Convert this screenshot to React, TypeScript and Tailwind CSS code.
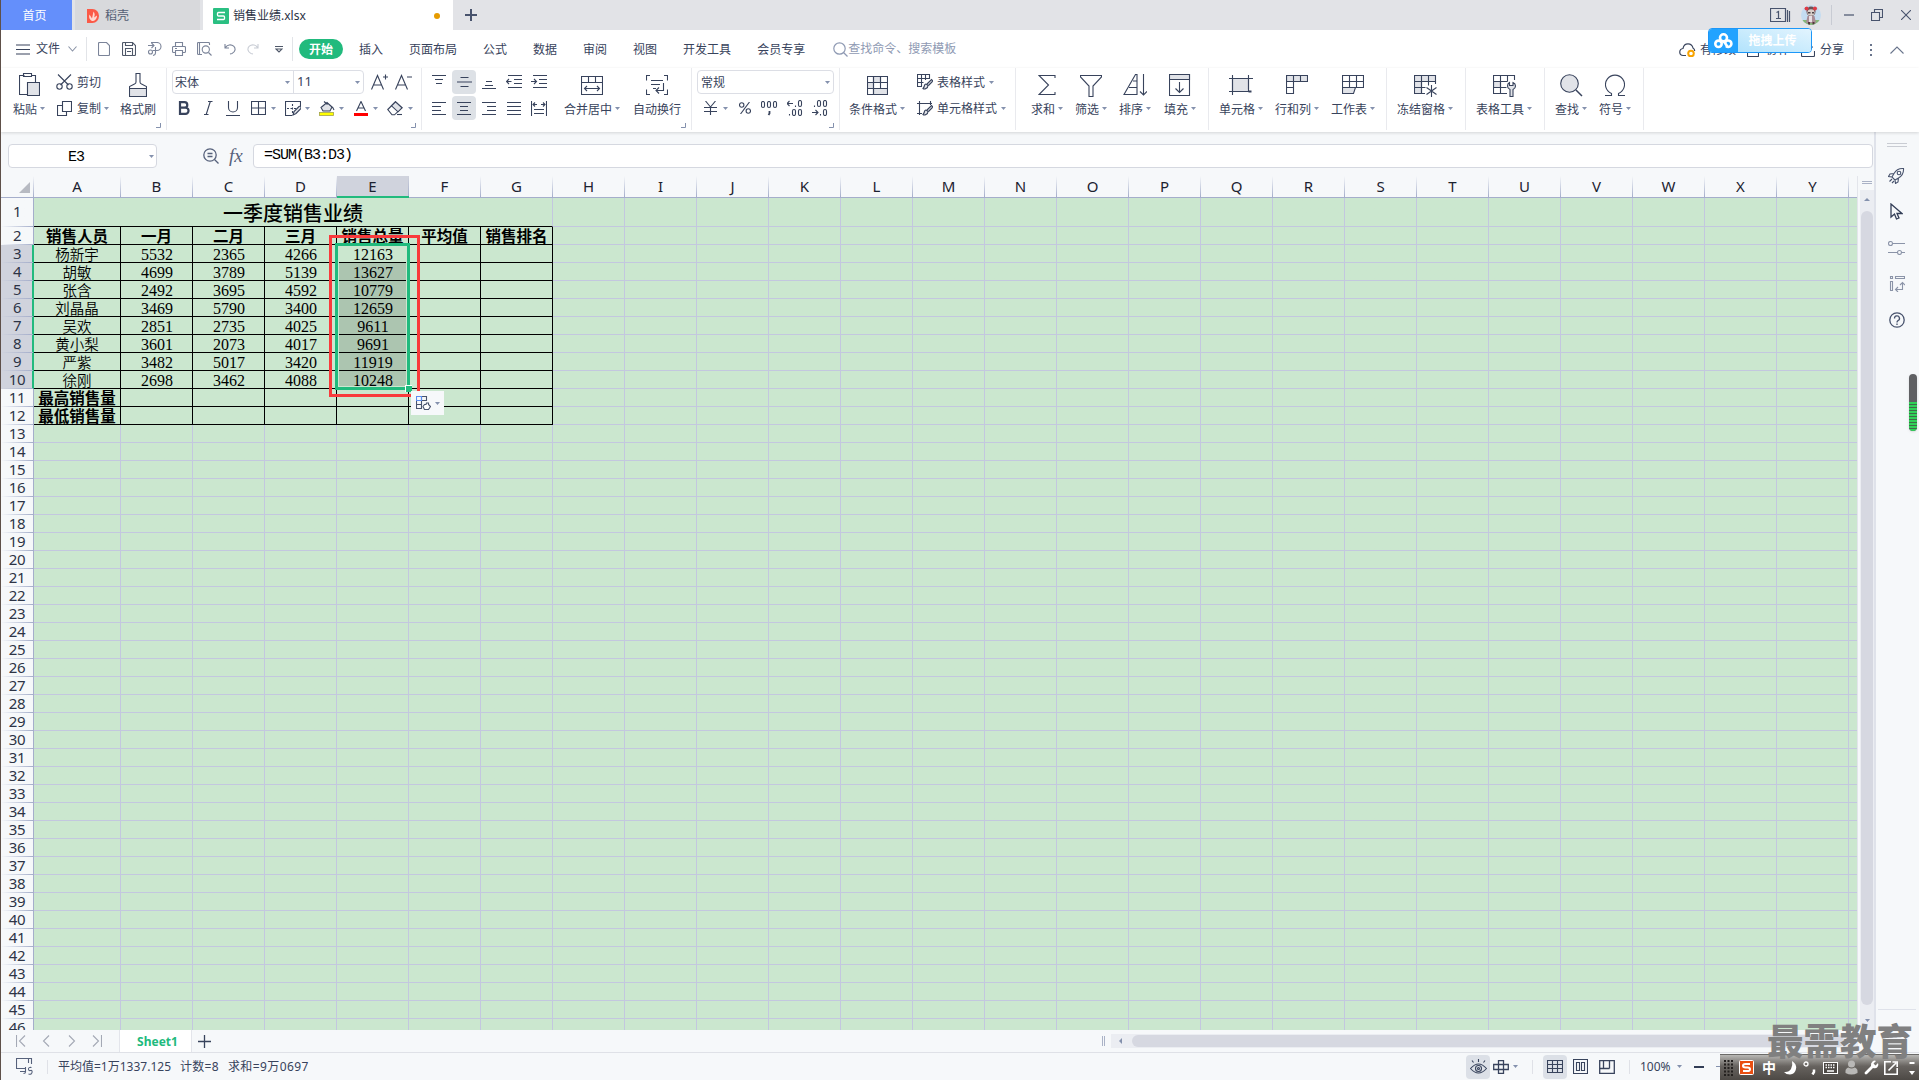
import type { ReactNode } from "react";
import clsx from "clsx";

type IcoProps = { w: number; h: number; className?: string; sw?: number; children: ReactNode };

function Ico({ w, h, className, sw = 1.1, children }: IcoProps) {
  return (
    <svg
      width={w}
      height={h}
      viewBox={`0 0 ${w} ${h}`}
      fill="none"
      stroke="currentColor"
      strokeWidth={sw}
      className={clsx("shrink-0", className)}
    >
      {children}
    </svg>
  );
}

function Caret({ className }: { className?: string }) {
  return (
    <svg width="5" height="3" viewBox="0 0 5 3" className={clsx("shrink-0 fill-[#8491ad]", className)}>
      <path d="M0 0h5L2.5 3z" />
    </svg>
  );
}

function Launcher() {
  return (
    <Ico w={5} h={5} className="absolute bottom-[2px] right-[5px] text-[#8491ad]" sw={1}>
      <path d="M4.5 0v4.5H0" />
    </Ico>
  );
}

function Group({ className, launcher, children }: { className: string; launcher?: boolean; children: ReactNode }) {
  return (
    <div className={clsx("relative flex h-[62px] shrink-0 border-r border-[#e9eaee] pt-0.5", className)}>
      {children}
      {launcher && <Launcher />}
    </div>
  );
}

function Tool({ label, caret = true, className, children }: { label: string; caret?: boolean; className?: string; children: ReactNode }) {
  return (
    <div className={clsx("flex shrink-0 flex-col items-center", className)}>
      <div className="flex h-[30px] items-center">{children}</div>
      <div className="flex h-[18px] items-center gap-[3px] whitespace-nowrap pt-0.5">
        {label}
        {caret && <Caret className="-mt-1" />}
      </div>
    </div>
  );
}

const tabs = ["插入", "页面布局", "公式", "数据", "审阅", "视图", "开发工具", "会员专享"];

function TitleBar() {
  return (
    <div className="flex h-[30px] bg-[#e2e3e7]">
      <div className="flex w-[71px] items-center justify-center bg-[#648ffb] pr-1 pt-0.5 text-white">首页</div>
      <div className="ml-[3px] flex w-[125px] items-center bg-[#d8d9dc] pl-3 pt-0.5 text-[#555f75]">
        <svg width="12" height="14" viewBox="0 0 12 14">
          <path d="M0 0h5.500a6.500 7 0 0 1 0 14H0z" fill="#fb5a48" />
          <path d="M5 12C1.500 10 2 7 2.500 5.500L5 9.500 6.500 2.500c1.500 2 1.500 4 .5 6L10 6.500C10 10 8 12 5 12z" fill="#ffd9d2" />
        </svg>
        <span className="ml-[6px]">稻壳</span>
      </div>
      <div className="ml-[3px] flex w-[250px] items-center bg-white pl-2.5 pt-0.5 text-[#2b3245]">
        <svg width="16" height="16" viewBox="0 0 16 16" fill="none">
          <rect width="16" height="16" rx="1" fill="#2abf82" />
          <path d="M12 4.500H5.500a1 1 0 0 0-1 1v1.500a1 1 0 0 0 1 1h5a1 1 0 0 1 1 1v1.500a1 1 0 0 1-1 1H4" stroke="#fff" strokeWidth="1.300" />
        </svg>
        <span className="ml-1">销售业绩.xlsx</span>
        <span className="ml-auto mr-[13px] size-1.5 rounded-full bg-[#e69b00]" />
      </div>
      <Ico w={12} h={12} className="ml-3 mt-[9px] text-[#48536d]" sw={2}>
        <path d="M6 0v12M0 6h12" />
      </Ico>
      <div className="ml-auto flex items-center text-[#48536d]">
        <Ico w={21} h={15} sw={1.2}>
          <path d="M.5.5h15v13H.5zM17.500 2v12M19.500 3v11" />
          <path d="M6.500 4.500 8.500 3.500V10.500M6 10.500h5" />
        </Ico>
        <svg width="20" height="20" viewBox="0 0 20 20" className="ml-2.5">
          <clipPath id="avatar"><circle cx="10" cy="10" r="10" /></clipPath>
          <g clipPath="url(#avatar)">
            <path d="M0 0h20v20H0z" fill="#c4dcf1" />
            <path d="M0 15h20v5H0z" fill="#85b678" />
            <ellipse cx="10" cy="6.500" rx="4.500" ry="5" fill="#6d5256" />
            <circle cx="5.500" cy="3.500" r="2" fill="#df3b45" />
            <circle cx="14" cy="3.500" r="2" fill="#df3b45" />
            <ellipse cx="10" cy="7.500" rx="3.600" ry="3.200" fill="#d9cdc8" />
            <path d="M7 7h2.500v1.500H7zM11 7h2v1.500h-2z" fill="#4a4348" />
            <path d="M6.500 11h7l1.500 7H5z" fill="#a88c96" />
            <path d="M8 11h3v6H8z" fill="#e8dfe4" />
            <path d="M7 17h2v3H7zM11.500 17h2v3h-2z" fill="#54373c" />
          </g>
        </svg>
        <span className="ml-2.5 h-5 w-px bg-[#c8cbd3]" />
        <Ico w={10} h={2} className="ml-3" sw={1.2}><path d="M0 1h10" /></Ico>
        <Ico w={12} h={12} className="ml-[17px]" sw={1.1}>
          <path d="M.5 3.500h8v8h-8zM3.500 3.500v-3h8v8h-3" />
        </Ico>
        <Ico w={10} h={10} className="ml-[18px] mr-2" sw={1.1}><path d="M0 0l10 10M10 0L0 10" /></Ico>
      </div>
    </div>
  );
}

function MenuBar() {
  return (
    <div className="flex h-[38px] items-center bg-white">
      <Ico w={14} h={11} className="ml-[15px]"><path d="M0 1h14M0 5.500h14M0 10h14" /></Ico>
      <span className="ml-1.5">文件</span>
      <Ico w={9} h={6} className="ml-2 text-[#8a93a6]"><path d="M.5.5l4 4.500 4-4.500" /></Ico>
      <span className="ml-[9px] h-6 w-px bg-[#e2e4e8]" />
      <div className="ml-[11px] flex items-center text-[#7b8499]">
        <Ico w={12} h={14}><path d="M1.500.5h7l3 3v9q0 1-1 1h-9q-1 0-1-1v-11q0-1 1-1z" /></Ico>
        <Ico w={14} h={14} className="ml-3 text-[#4f5869]">
          <path d="M1.500.5h9l3 3v9q0 1-1 1h-11q-1 0-1-1v-11q0-1 1-1zM3.500.5v3h7v-3M3.500 13.500v-7h7v7M5 9.500h4" />
        </Ico>
        <Ico w={15} h={14} className="ml-[11px]">
          <path d="M1 3.500h6M4.500 1L7 3.500 4.500 6M4 .5h6a4 4 0 0 1 0 8H5.500M8.500 5v6q0 2-2.500 2.500" />
          <circle cx="3.500" cy="10" r="2" />
        </Ico>
        <Ico w={14} h={14} className="ml-[10px]">
          <path d="M3.500 4V.5h7V4M3 10.500H1.500q-1 0-1-1v-4q0-1 1-1h11q1 0 1 1v4q0 1-1 1H11M3.500 8.500h7v5h-7zM3 6.500h2" />
        </Ico>
        <Ico w={15} h={14} className="ml-[11px]">
          <path d="M5 12.500H1.500q-1 0-1-1v-10q0-1 1-1h10q1 0 1 1V3M2.500 .5v12M11.500 10.500l3 3" />
          <circle cx="8.800" cy="7.500" r="3.600" />
        </Ico>
        <Ico w={12} h={12} className="ml-3"><path d="M1 1v4h4M1.500 4.500A5 4.500 0 1 1 8 10.500l-2 .5" /></Ico>
        <Ico w={12} h={12} className="ml-[11px] text-[#c9cdd5]"><path d="M11 1v4H7M10.500 4.500A5 4.500 0 1 0 4 10.500l2 .5" /></Ico>
        <Ico w={8} h={7} className="ml-4 text-[#4f5869]"><path d="M0 .5h8M1 3l3 3 3-3z" /></Ico>
      </div>
      <span className="ml-[9px] h-6 w-px bg-[#e2e4e8]" />
      <span className="ml-1.5 flex h-5 w-11 items-center justify-center rounded-full bg-[#21ba7d] pt-0.5 font-bold text-white">开始</span>
      <div className="ml-4 flex gap-[26px] pt-0.5">
        {tabs.map((t) => <span key={t}>{t}</span>)}
      </div>
      <div className="ml-7 flex items-center text-[#8f9ab3]">
        <Ico w={15} h={15} sw={1.2}><circle cx="6.500" cy="6.500" r="5.700" /><path d="M10.500 10.500l4 4" /></Ico>
        <span>查找命令、搜索模板</span>
      </div>
      <div className="ml-auto flex items-center pt-0.5">
        <Ico w={17} h={14} sw={1.2}>
          <path d="M7 12.500H4.500a3.500 3.500 0 0 1-.500-7C4.500 2.500 6.500.8 9 .8s4.500 1.800 5 4.200c1 .5 1.700 1.500 1.700 3" />
          <circle cx="12" cy="10.500" r="2.800" stroke="#f7a300" strokeWidth="2" />
        </Ico>
        <span className="ml-1">有修改</span>
        <Ico w={12} h={14} className="ml-[11px]"><path d="M.5 7v6q0 .5.5.5h10q.5 0 .5-.5V7M6 3v6" /></Ico>
        <span className="ml-[7px]">协作</span>
        <Ico w={14} h={13} className="ml-[11px]"><path d="M.5 6v5.500q0 1 1 1h11q1 0 1-1V7M5 8q1-5 7-5" /></Ico>
        <span className="ml-[5px]">分享</span>
        <span className="ml-[9px] h-5 w-px bg-[#dcdee3]" />
        <Ico w={2} h={12} className="ml-4 text-[#69748c]" sw={2}><path d="M1 0v2M1 5v2M1 10v2" /></Ico>
        <Ico w={14} h={8} className="ml-[18px] mr-[15px] text-[#69748c]"><path d="M.5 7.500L7 1l6.500 6.500" /></Ico>
      </div>
    </div>
  );
}

const GREY = "#e1e3e8";

function Ribbon() {
  return (
    <div className="relative z-10 flex h-16 bg-white shadow-[0_1px_3px_rgba(0,0,0,0.14)]">
      <Group className="w-[166px]" launcher>
        <Tool label="粘贴" className="ml-3">
          <Ico w={21} h={24}>
            <path d="M5.500 2.500h-5v19h8M16.500 9V2.500h-4M4.500.5h8v3h-8z" />
            <path d="M8.500 9.500h12v13h-12z" fill={GREY} />
          </Ico>
        </Tool>
        <div className="ml-[11px] flex flex-col gap-0.5">
          <div className="flex h-6 items-center">
            <Ico w={17} h={16}>
              <path d="M2 .5l10.500 10.500M15 .5L4.500 11" />
              <circle cx="3.500" cy="12.500" r="2.700" />
              <circle cx="13.500" cy="12.500" r="2.700" />
            </Ico>
            <span className="ml-1 pt-0.5">剪切</span>
          </div>
          <div className="flex h-6 items-center">
            <Ico w={15} h={15} className="ml-px"><path d="M5.500.5h9v10h-9zM5 4.500H.5v10h9V11" /></Ico>
            <span className="ml-[5px] pt-0.5">复制</span>
            <Caret className="ml-[3px]" />
          </div>
        </div>
        <Tool label="格式刷" caret={false} className="ml-[11px]">
          <Ico w={18} h={24}>
            <path d="M7 .5h4V9q0 1.500 1.500 2l5 2.500v2H.5v-2l5-2.500Q7 10.500 7 9z" />
            <path d="M.5 15.500h17v8H.5z" fill={GREY} />
          </Ico>
        </Tool>
      </Group>

      <Group className="w-[255px]" launcher>
        <div className="ml-[5px] flex flex-col gap-0.5">
          <div className="flex h-6 items-center">
            <div className="flex h-6 w-[192px] rounded-sm border border-[#dcdee5]">
              <div className="flex w-[121px] items-center justify-between border-r border-[#dcdee5] pl-0.5 pr-[3px]"><span className="pt-0.5">宋体</span><Caret /></div>
              <div className="flex flex-1 items-center justify-between pl-[3px] pr-[3px] text-[13px]">11<Caret /></div>
            </div>
            <Ico w={17} h={16} className="ml-[7px]"><path d="M.5 15.500L6.500 1.500l6 14M2.500 11h8M12 3h5M14.500.5v5" /></Ico>
            <Ico w={17} h={16} className="ml-[7px]"><path d="M.5 15.500L6.500 1.500l6 14M2.500 11h8M12 3h5" /></Ico>
          </div>
          <div className="flex h-6 items-center">
            <Ico w={12} h={14} className="ml-[6px]" sw={2.2}><path d="M2 1.100h4.500a2.800 2.800 0 0 1 0 5.600H2zM2 6.700h5.500a3 3 0 0 1 0 6.100H2z" /></Ico>
            <Ico w={9} h={14} className="ml-3.5"><path d="M4 .5h4.500M0 13.500h4.500M6.300.5L2.200 13.500" /></Ico>
            <Ico w={14} h={15} className="ml-[13px]"><path d="M2.500 0v6.500a4.500 4.500 0 0 0 9 0V0M0 14.500h14" /></Ico>
            <Ico w={15} h={14} className="ml-[11px]"><path d="M.5.5h14v13H.5zM7.500.5v13M.5 7h14" /></Ico>
            <Caret className="ml-[5px]" />
            <Ico w={16} h={15} className="ml-[9px]">
              <path d="M15.500 5V.5H.5v14H7" /><path d="M7.500 3v9M2 7.500h9" strokeDasharray="2 1.500" />
              <path d="M8 14l1-3.500 5-5q1-.5 1.700.3T16 7.500l-5 5z" fill={GREY} />
            </Ico>
            <Caret className="ml-1" />
            <Ico w={16} h={15} className="ml-[9px]">
              <path d="M2 6.500l6-5 5 4.500-2 4H4zM5 .5l3.500 3M13.500 6l1.500 3" fill={GREY} />
              <rect x=".5" y="11.500" width="14" height="3" fill="#ffff00" stroke="#a3a34a" strokeWidth=".8" />
            </Ico>
            <Caret className="ml-1" />
            <Ico w={14} h={15} className="ml-[10px]"><path d="M2.500 10L7 .5 11.500 10M4 7h6" /><path d="M0 13.500h14" stroke="#ff0000" strokeWidth="3" /></Ico>
            <Caret className="ml-[5px]" />
            <Ico w={17} h={15} className="ml-[9px]">
              <path d="M.8 8.500L8.500.8l6.500 6-7.500 7H5z" /><path d="M8.500.8l6.500 6-4 4-6.500-6z" fill={GREY} /><path d="M10 13.500h5" />
            </Ico>
            <Caret className="ml-1" />
          </div>
        </div>
      </Group>

      <Group className="w-[270px]" launcher>
        <div className="ml-2.5 flex flex-col gap-0.5">
          <div className="flex h-6 items-center">
            <Ico w={14} h={18}><path d="M0 2.500h14M3 6.500h8M4 10.500h6" /></Ico>
            <span className="ml-1.5 flex size-6 items-center justify-center rounded-sm bg-[#dde1e6]">
              <Ico w={15} h={10}><path d="M3.500.5h8M0 5h15M3.500 9.500h8" /></Ico>
            </span>
            <Ico w={14} h={16} className="ml-1.5"><path d="M4 7.500h6M3 11.500h8M0 14.500h14" /></Ico>
            <Ico w={16} h={14} className="ml-2.5"><path d="M2 .5h14M8 4.500h8M8 8.500h8M2 12.500h14M.5 6.500h5M3 4L.5 6.500 3 9" /></Ico>
            <Ico w={16} h={14} className="ml-[9px]"><path d="M2 .5h14M8 4.500h8M8 8.500h8M2 12.500h14M0 6.500h5M3 4l2.500 2.500L3 9" /></Ico>
          </div>
          <div className="flex h-6 items-center">
            <Ico w={14} h={13}><path d="M0 .5h14M0 4.500h9M0 8.500h9M0 12.500h14" /></Ico>
            <span className="ml-1.5 flex size-6 items-center justify-center rounded-sm bg-[#dde1e6]">
              <Ico w={14} h={13}><path d="M0 .5h14M3 4.500h8M3 8.500h8M0 12.500h14" /></Ico>
            </span>
            <Ico w={14} h={13} className="ml-1.5"><path d="M0 .5h14M5 4.500h9M5 8.500h9M0 12.500h14" /></Ico>
            <Ico w={14} h={13} className="ml-[11px]"><path d="M0 .5h14M0 4.500h14M0 8.500h14M0 12.500h14" /></Ico>
            <Ico w={16} h={15} className="ml-2.5"><path d="M.5 0v15M15.500 0v15M2 3.500h4M10 3.500h4M4 1.500l-2 2 2 2M12 1.500l2 2-2 2M3 8.500h10M3 12.500h10" /></Ico>
          </div>
        </div>
        <Tool label="合并居中" className="ml-[17px]">
          <Ico w={22} h={19}><path d="M.5.5h21v18H.5zM.5 6.500h21M7.500.5v6M14.500.5v6M3.500 12.500h15M6 10l-2.500 2.500L6 15M16 10l2.500 2.500L16 15" /></Ico>
        </Tool>
        <Tool label="自动换行" caret={false} className="ml-[13px]">
          <Ico w={22} h={20}><path d="M4 .5H.5v5M18 .5h3.500v5M4 19.500H.5v-5M18 19.500h3.500v-5M5 5.500h12M5 9.500h9M7 13.500h3M17.500 8v7.500H10M13 12.500l-3 3 3 3" /></Ico>
        </Tool>
      </Group>

      <Group className="w-[148px]" launcher>
        <div className="ml-[5px] flex flex-col gap-0.5">
          <div className="flex h-6 w-[137px] items-center justify-between rounded-sm border border-[#dcdee5] pl-[3px] pr-[3px]"><span className="pt-0.5">常规</span><Caret /></div>
          <div className="flex h-6 items-center">
            <Ico w={13} h={14} className="ml-[7px]"><path d="M1.500 0l5 6 5-6M6.500 6v8M0 6.500h13M0 10.500h13" /></Ico>
            <Caret className="ml-1.5" />
            <Ico w={12} h={12} className="ml-[11px]"><circle cx="2.700" cy="3" r="2.200" /><circle cx="9.300" cy="9" r="2.200" /><path d="M10.500 0l-9 12" /></Ico>
            <Ico w={17} h={15} className="ml-2.5"><rect x=".5" y=".5" width="3" height="6" rx="1.500" /><rect x="6.500" y=".5" width="3" height="6" rx="1.500" /><rect x="12.500" y=".5" width="3" height="6" rx="1.500" /><path d="M8.500 10v2.500L7.500 14" strokeWidth="1.800" /></Ico>
            <Ico w={16} h={16} className="ml-[9px]"><path d="M0 3.500h6M2.500 1L0 3.500 2.500 6M8.500 5.500v1.500M2.500 14v1.500" /><rect x="11.500" y=".5" width="3" height="6" rx="1.500" /><rect x="5.500" y="9.500" width="3" height="6" rx="1.500" /><rect x="11.500" y="9.500" width="3" height="6" rx="1.500" /></Ico>
            <Ico w={16} h={16} className="ml-[9px]"><path d="M0 12.500h6M3.500 10L6 12.500 3.500 15M2.500 5.500v1.500M8.500 14v1.500" /><rect x="5.500" y=".5" width="3" height="6" rx="1.500" /><rect x="11.500" y=".5" width="3" height="6" rx="1.500" /><rect x="11.500" y="9.500" width="3" height="6" rx="1.500" /></Ico>
          </div>
        </div>
      </Group>

      <Group className="w-[176px]">
        <Tool label="条件格式" className="ml-[9px]">
          <Ico w={21} h={19}>
            <path d="M.5.5h20v18H.5z" /><path d="M6.500.5h7v6h-7zM.5 6.500h6v6h-6zM6.500 12.500h14v6h-14z" fill={GREY} /><path d="M.5 6.500h20M.5 12.500h20M6.500.5v18M13.500.5v12" />
          </Ico>
        </Tool>
        <div className="ml-3 flex flex-col gap-0.5">
          <div className="flex h-6 items-center">
            <Ico w={16} h={16}>
              <path d="M12.500 5V.5H.5v12H5M.5 4.500h12M.5 8.500h6M4.500.5v12M8.500.5V6" />
              <path d="M6 14.500q1-1 1.500-3t2.500-1l1 1q0 2-2 3t-3 0zM10 10l4.500-4.500L16 7l-4.500 4.500" fill={GREY} />
            </Ico>
            <span className="ml-1 pt-0.5">表格样式</span><Caret className="ml-1" />
          </div>
          <div className="flex h-6 items-center">
            <Ico w={16} h={15}>
              <path d="M0 2.500h15M2.500 0v14M0 12.500h5M13.500 0v4" />
              <path d="M6 13.500q1-1 1.500-3t2.500-1l1 1q0 2-2 3t-3 0zM10 9l4.500-4.500L16 6l-4.500 4.500" fill={GREY} />
            </Ico>
            <span className="ml-1 pt-0.5">单元格样式</span><Caret className="ml-1" />
          </div>
        </div>
      </Group>

      <Group className="w-[193px]">
        <Tool label="求和" className="ml-[15px]">
          <Ico w={18} h={20}><path d="M17 3V.5H1L10.500 10 1 19.500h16V17" /></Ico>
        </Tool>
        <Tool label="筛选" className="ml-3">
          <Ico w={22} h={22} className="mt-0.5"><path d="M.5.5h21v1.500L13 11v10.500H9V11L.5 2z" /></Ico>
        </Tool>
        <Tool label="排序" className="ml-3">
          <Ico w={24} h={22}><path d="M1 20.500L12.500.5H14v20zM10 7h4M6 13.500h8M20.500 0v21M17 17.500l3.500 3.500 3.500-3.500" /></Ico>
        </Tool>
        <Tool label="填充" className="ml-[13px]">
          <Ico w={22} h={22}><path d="M.5.5h20v21H.5z" /><path d="M.5.5h20v5H.5z" fill={GREY} /><path d="M10.500 8v10.500M6.500 14.500l4 4 4-4" /></Ico>
        </Tool>
      </Group>

      <Group className="w-[178px]">
        <Tool label="单元格" className="ml-2.5">
          <Ico w={24} h={20}><path d="M3.500 3.500h16v13h-16z" fill={GREY} /><path d="M0 3.500h24M3.500 0v20M0 16.500h19M19.500 0v14" /><path d="M19.500 16.500h3" strokeWidth="2" /></Ico>
        </Tool>
        <Tool label="行和列" className="ml-3">
          <Ico w={22} h={20}><path d="M.5.5h21v6H.5z" fill={GREY} /><path d="M7.500.5v18h-7V.5M14.500.5v6M.5 12.500h7" /></Ico>
        </Tool>
        <Tool label="工作表" className="ml-3">
          <Ico w={22} h={20}><path d="M.5 12.500h13l-2 6H.5z" fill={GREY} /><path d="M.5.500h21v12H.5zM.5 6.500h21M7.500.5v12M14.500.5v12" /></Ico>
        </Tool>
      </Group>

      <Group className="w-[79px]">
        <Tool label="冻结窗格" className="ml-2.5">
          <Ico w={24} h={22} className="ml-0.5 mt-0.5">
            <path d="M.5.5h21v6h-14v12h-7z" fill={GREY} /><path d="M21.500 6.500V9M.5 6.500h7v-6M14.500.5v10M.5 12.500h11M7.500 6.500v12H11" />
            <path d="M17.500 10v12M12.500 12.500l10 7M22.500 12.500l-10 7" />
          </Ico>
        </Tool>
      </Group>

      <Group className="w-[79px]">
        <Tool label="表格工具" className="ml-2.5">
          <Ico w={24} h={22} className="ml-0.5 mt-0.5">
            <path d="M.5 6.500h7v6h-7z" fill={GREY} /><path d="M21.500 5V.5H.5v18H14M.5 6.500h14M.5 12.500h13M7.500.5v18M14.500.5v6" />
            <path d="M17 21.500v-7q-2.500-1-2.500-3.500t2-3.500v3h3.500v-3q2.500 1 2.500 3.500T20 14.500v7z" fill={GREY} />
          </Ico>
        </Tool>
      </Group>

      <Group className="w-[99px]">
        <Tool label="查找" className="ml-2.5">
          <Ico w={23} h={23}><circle cx="9.500" cy="9.500" r="8.800" fill={GREY} /><path d="M16 16l6 6" strokeWidth="1.500" /></Ico>
        </Tool>
        <Tool label="符号" className="ml-3">
          <Ico w={20} h={22}><path d="M0 21.500h6.500v-2A9.500 9.500 0 1 1 13.500 19.500v2H20" /></Ico>
        </Tool>
      </Group>
    </div>
  );
}

function FormulaBar() {
  return (
    <div className="flex h-11 items-start pt-3">
      <div className="ml-[7px] flex h-6 w-[149px] items-center rounded-sm border border-[#d5d8e0] bg-white pr-[2px] text-black">
        <span className="flex-1 pr-1.5 pt-1 text-center font-['Liberation_Mono',monospace] text-[15px] leading-4 tracking-[-1px]">E3</span>
        <Caret />
      </div>
      <Ico w={16} h={16} className="ml-[46px] mt-1 text-[#56617b]" sw={1.3}>
        <circle cx="7" cy="7" r="6.200" /><path d="M11.500 11.500l4 4M4.500 5.500h5M4.500 8.500h5" />
      </Ico>
      <span className="ml-2.5 h-6 w-[18px] font-['Liberation_Serif',serif] text-[19px] italic leading-6 text-[#56617b]">fx</span>
      <div className="ml-[6px] flex h-6 w-[1620px] items-center rounded-sm border border-[#d5d8e0] bg-white pl-2.5 font-['Liberation_Mono',monospace] text-[15px] leading-4 tracking-[-1px] text-black">
        =SUM(B3:D3)
      </div>
    </div>
  );
}

const letters = "ABCDEFGHIJKLMNOPQRSTUVWXY".split("");
const rowNumbers = Array.from({ length: 45 }, (_, i) => i + 2);

const cells: Record<number, string[]> = {
  2: ["销售人员", "一月", "二月", "三月", "销售总量", "平均值", "销售排名"],
  3: ["杨新宇", "5532", "2365", "4266", "12163"],
  4: ["胡敏", "4699", "3789", "5139", "13627"],
  5: ["张含", "2492", "3695", "4592", "10779"],
  6: ["刘晶晶", "3469", "5790", "3400", "12659"],
  7: ["吴欢", "2851", "2735", "4025", "9611"],
  8: ["黄小梨", "3601", "2073", "4017", "9691"],
  9: ["严紫", "3482", "5017", "3420", "11919"],
  10: ["徐刚", "2698", "3462", "4088", "10248"],
  11: ["最高销售量"],
  12: ["最低销售量"],
};

function RowHead({ n }: { n: number }) {
  const selected = n >= 3 && n <= 10;
  return (
    <div
      className={clsx(
        "flex w-[33px] shrink-0 flex-col border-r",
        selected ? "border-[#21ba7d] bg-[#d0d3dd] shadow-[inset_-1px_0_0_#21ba7d]" : "border-[#a5aecb]",
      )}
    >
      <div className="flex min-h-0 flex-1 items-center justify-center pb-0.5 tracking-[-0.4px]">{n}</div>
      <div className="h-px bg-linear-to-r from-transparent to-[#a5aecb]" />
    </div>
  );
}

function Row({ n }: { n: number }) {
  const inTable = n <= 12;
  return (
    <div className="flex h-[18px] shrink-0">
      <RowHead n={n} />
      {letters.map((l, c) => {
        const text = cells[n]?.[c];
        const bordered = inTable && c < 7;
        return (
          <div
            key={l}
            className={clsx(
              "flex shrink-0 items-center justify-center overflow-visible whitespace-nowrap border-b border-r text-black",
              c === 0 ? "w-[87px]" : "w-[72px]",
              bordered ? "border-black" : "border-[#c3c7df]",
              n === 2 || n > 10 ? "pb-0.5 font-['Noto_Sans_CJK_SC',sans-serif] text-[15.500px] font-bold" : c === 0 ? "font-['Noto_Sans_CJK_SC',sans-serif] text-[14.500px] font-[350]" : "pl-px pt-[3px] font-['Liberation_Serif',serif] text-[16px]",
              c === 4 && n >= 4 && n <= 10 && "bg-[#acc5b0]",
            )}
          >
            {text}
          </div>
        );
      })}
      <div className="w-2 border-b border-[#c3c7df]" />
    </div>
  );
}

function Sheet() {
  return (
    <div className="relative flex h-[854px] w-[1856px] flex-col overflow-hidden text-[15px] text-[#2d3446]">
      <div className="flex h-[22px] shrink-0 border-b border-[#a5aecb]">
        <div className="flex w-[33px] shrink-0 justify-end">
          <svg width="11" height="11" viewBox="0 0 11 11" className="mt-1.5 fill-[#b7bac2]"><path d="M11 0v11H0z" /></svg>
          <span className="ml-[3px] w-px bg-linear-to-b from-transparent to-[#a5aecb]" />
        </div>
        {letters.map((l) => (
          <div key={l} className={clsx("flex shrink-0", l === "A" ? "w-[87px]" : "w-[72px]", l === "E" && "h-[22px] border-b-2 border-[#21ba7d] bg-[#d0d3dd]")}>
            <span className="flex-1 text-center leading-5 text-[#1c2230]">{l}</span>
            <span className="w-px bg-linear-to-b from-transparent to-[#a5aecb]" />
          </div>
        ))}
      </div>
      <div className="flex min-h-0 flex-1 flex-col overflow-hidden bg-linear-to-r from-[#f6f8fa] from-[33px] to-[#cbe7cf] to-[33px] leading-4">
        <div className="flex h-[29px] shrink-0">
          <RowHead n={1} />
          <div className="flex w-[519px] shrink-0 items-center justify-center border-b border-r border-b-black border-r-[#c3c7df] pt-0.5 font-['Noto_Sans_CJK_SC',sans-serif] text-[20px] font-medium text-black">
            一季度销售业绩
          </div>
          {letters.slice(7).map((l) => (
            <div key={l} className="w-[72px] shrink-0 border-b border-r border-[#c3c7df]" />
          ))}
          <div className="w-2 border-b border-[#c3c7df]" />
        </div>
        {rowNumbers.map((n) => <Row key={n} n={n} />)}
      </div>

      {/* selection frame, highlight box and paste options lie over the cells */}
      <div className="absolute left-[334px] top-[67px] h-[147px] w-[75px] border-3 border-[#21ba7d] shadow-[inset_0_0_0_1px_#cbe7cf]" />
      <div className="absolute left-[328px] top-[59px] h-[162px] w-[91px] border-3 border-[#f93a3c]" />
      <div className="absolute left-[404px] top-[209px] size-[7px] border-l border-t border-white bg-[#21ba7d]" />
      <div className="absolute left-[410px] top-[215px] flex h-6 w-[33px] items-center gap-1 bg-[#f6f8fa] pl-[5px] text-[#48536d]">
        <Ico w={15} h={15}>
          <path d="M5.500.5h5v4h-5zM.5 4.500h5v4h-5zM.5 8.500h5v4h-5z" /><path d="M.5.5h5v4h-5z" stroke="#5b8def" />
          <path d="M7 10.500l1.500-2H10l.5-1.500h2v1.500l2 2-2 3h-4z" fill="#fff" />
        </Ico>
        <Caret />
      </div>
    </div>
  );
}

function VerticalScroll() {
  return (
    <div className="flex w-[17px] flex-col border-l border-[#e3e5eb] pl-0.5">
      <div className="h-3.5 pl-0.5 pt-[5px]"><div className="h-[3px] w-2.5 border-y border-[#aab2c6]" /></div>
      <div className="flex flex-1 flex-col items-center bg-[#ebedf2]">
        <svg width="6" height="3" viewBox="0 0 6 3" className="mt-2 fill-[#8491ad]"><path d="M0 3h6L3 0z" /></svg>
        <div className="mt-2.5 h-[794px] w-3 rounded-full bg-[#d6d8e1]" />
        <Caret className="mt-3.5" />
      </div>
    </div>
  );
}

function SidePanel() {
  return (
    <div className="relative flex w-[45px] shrink-0 flex-col items-center border-l-2 border-[#dfe2ea] pr-0.5 text-[#48536d]">
      <div className="mt-[11px] h-1 w-5 border-y border-[#c9ccd3]" />
      <Ico w={17} h={17} className="mt-5">
        <path d="M6 6.500Q9 1 15.500 1.500 16 8 10.500 11M6 6.500L2 7l-1.500 2.500L4 10l3 3 .5 3.500L10 15l.5-4M6 6.500L4 10M10.500 11L7 13M4 12l-2.500 2.500M6 14l-2 2" />
        <circle cx="11" cy="6" r="1.800" />
      </Ico>
      <Ico w={13} h={17} className="mt-[19px] text-[#323d56]" sw={1.3}><path d="M1 1v13l3.500-3 2 5 2.500-1-2-4.500H12z" /></Ico>
      <Ico w={17} h={14} className="mt-[21px] text-[#8b94a8]"><circle cx="2.500" cy="2.500" r="2" /><path d="M5 2.500h12M0 11.500h9M14 11.500h3" /><circle cx="11.500" cy="11.500" r="2" /></Ico>
      <Ico w={16} h={16} className="mt-[21px] text-[#8b94a8]">
        <path d="M1.500.5h2v2h-2zM6.500.5h9v2h-9zM1.500 5.500h2v9h-2zM13.500 7v6.500H7M11 9l2.500-2.500L16 9M9 11l-2.500 2.500L9 16" />
      </Ico>
      <Ico w={16} h={16} className="mt-5" sw={1.3}><circle cx="8" cy="8" r="7.200" /><path d="M5.500 6.500a2.500 2.500 0 1 1 3.500 2.200Q8 9.200 8 10.500M8 11.500v1.500" /></Ico>
      <div className="absolute right-[2px] top-[242px] flex h-[57px] w-2 flex-col overflow-hidden rounded-full bg-[#5f6063] shadow">
        <div className="mt-7 flex-1 bg-[repeating-linear-gradient(to_bottom,#30d158_0_2px,#3f6b4a_2px_3px)]" />
      </div>
      <div className="absolute left-0.5 top-[877px] h-px w-[38px] bg-[#dfe2ea]" />
    </div>
  );
}

function SheetBar() {
  return (
    <div className="flex h-[23px] items-center border-b border-[#dfe1e7]">
      <div className="flex items-center text-[#a4a9b5]">
        <Ico w={10} h={12} className="ml-[15px]"><path d="M.5 0v12M9 .5L3.500 6 9 11.500" /></Ico>
        <Ico w={8} h={12} className="ml-4"><path d="M7 .5L1.500 6 7 11.500" /></Ico>
        <Ico w={8} h={12} className="ml-[18px]"><path d="M1 .5L6.500 6 1 11.500" /></Ico>
        <Ico w={10} h={12} className="ml-4"><path d="M9.500 0v12M1 .5L6.500 6 1 11.500" /></Ico>
      </div>
      <div className="ml-[17px] flex h-[22px] w-[73px] items-center justify-center border-x border-[#e3e5eb] bg-white pl-1 pt-px font-bold text-[#21ba7d]">Sheet1</div>
      <Ico w={13} h={13} className="ml-1.5" sw={1.3}><path d="M6.500 0v13M0 6.500h13" /></Ico>
      <div className="ml-[891px] h-2.5 w-[3px] border-x border-[#aab2c6]" />
      <div className="ml-1.5 flex h-3.5 w-[747px] items-center bg-[#ebedf2]">
        <svg width="3" height="6" viewBox="0 0 3 6" className="ml-2 fill-[#8491ad]"><path d="M3 0v6L0 3z" /></svg>
        <div className="ml-2.5 h-3 w-[712px] rounded-full bg-[#d6d8e1]" />
      </div>
    </div>
  );
}

function StatusBar() {
  return (
    <div className="flex h-[27px] items-center">
      <Ico w={17} h={17} className="ml-[15px] text-[#56617b]">
        <path d="M9 10.500H.5V.5h15V6M4 13.500h5M12.500 1v4M9.500 9v5q0 1.500-2 1.500M15.500 9.500q-3-.5-3 1.500t2 1.500 1.500 2-3.500 1.500" />
      </Ico>
      <span className="ml-[14px] h-3.5 w-px bg-[#dfe1e7]" />
      <div className="ml-2.5 flex gap-[9px] whitespace-nowrap">
        <span>平均值=1万1337.125</span>
        <span className="tracking-[0.3px]">计数=8</span>
        <span className="tracking-[0.4px]">求和=9万0697</span>
      </div>
      <div className="ml-auto mr-[199px] flex items-center">
        <span className="flex size-6 items-center justify-center rounded-sm bg-[#dce0e7]">
          <Ico w={17} h={16}><path d="M.5 9.500Q8.500.5 16.500 9.500 8.500 18.500.5 9.500zM8.500 0v3M2 1.500l1.500 2M15 1.500l-1.500 2" /><circle cx="8.500" cy="9.500" r="3" /><circle cx="8.500" cy="9.500" r="1" /></Ico>
        </span>
        <Ico w={16} h={14} className="ml-[3px]" sw={1.3}><path d="M5.500.700h5v12.600h-5zM.7 4.500h14.600v5H.7z" /></Ico>
        <Caret className="ml-1" />
        <span className="ml-3.5 h-3.5 w-px bg-[#dfe1e7]" />
        <span className="ml-2.5 flex size-6 items-center justify-center rounded-sm bg-[#dce0e7]">
          <Ico w={16} h={13}><path d="M.5.5h15v12H.5zM.5 4.500h15M.5 8.500h15M5.500.5v12M10.500.5v12" /></Ico>
        </span>
        <Ico w={15} h={15} className="ml-1.5" sw={1.1}><path d="M.5.5h14v14H.5zM3.500 3.500h3v8h-3zM8.500 3.500h3v8h-3z" /></Ico>
        <Ico w={16} h={14} className="ml-[11px]" sw={1.3}><path d="M.7.7h14.600v12.600H.7zM.7 8.500h9.800M4.500.7v7.800M10.500.7v7.800" /></Ico>
        <span className="ml-3.5 h-3.5 w-px bg-[#dfe1e7]" />
        <span className="ml-2.5 w-[33px]">100%</span>
        <Caret className="ml-1" />
        <span className="ml-3 h-0.5 w-2.5 bg-[#323d56]" />
        <span className="ml-3 h-px w-1 bg-[#8491ad]" />
      </div>
    </div>
  );
}

function ImeBar() {
  return (
    <div className="absolute bottom-0 right-0 flex h-[26px] w-[199px] items-center border-t border-[#6b6a68] bg-linear-to-b from-[#b9b8b5] via-[#67635f] via-45% to-[#4d4945] text-white">
      <svg width="9" height="16" viewBox="0 0 9 16" className="ml-1">
        <path d="M1 0v16M4.500 0v16M8 0v16" stroke="#24211f" strokeWidth="2" strokeDasharray="2 1.500" />
      </svg>
      <svg width="15" height="15" viewBox="0 0 15 15" fill="none" className="ml-1.5">
        <rect x=".5" y=".5" width="14" height="14" rx="1" fill="#e94f12" stroke="#fff" />
        <path d="M11 4H6.500Q4 4 4 5.700t2.500 1.800h2Q11 7.500 11 9.300T8.500 11H4" stroke="#fff" strokeWidth="2" />
      </svg>
      <span className="ml-2 text-[14px] font-bold leading-4">中</span>
      <svg width="13" height="14" viewBox="0 0 13 14" className="ml-2 fill-white"><path d="M8 0q5 3 4 8t-6 5.500Q2 13.500 0 11q5 .5 7-3t1-8z" /></svg>
      <Ico w={14} h={14} className="ml-1.5" sw={1.3}><circle cx="3" cy="3" r="2" /><path d="M11 8.500v2.500L9.500 13.500" strokeWidth="2.500" /></Ico>
      <svg width="15" height="12" viewBox="0 0 15 12" fill="none" className="ml-1.5">
        <rect x=".5" y=".5" width="14" height="11" fill="#4d4945" stroke="#fff" />
        <path d="M2.500 3h10M2.500 5.500h10" stroke="#fff" strokeWidth="1.500" strokeDasharray="1.500 1" /><path d="M4 9h7" stroke="#fff" strokeWidth="1.500" />
      </svg>
      <svg width="13" height="15" viewBox="0 0 13 15" className="ml-[7px] fill-[#b9b8b6]"><circle cx="6.500" cy="4" r="3.500" /><path d="M.5 13V11q0-2.500 3-3.500 3 2 6 0 3 1 3 3.500v2q-6 3-12 0z" /></svg>
      <svg width="15" height="15" viewBox="0 0 15 15" className="ml-1.5 fill-white"><path d="M1 12l6-6q-.5-3 1.500-4.500T12 1L9.500 3.500l2 2L14 3q1 2-.5 4T9 8l-6 6q-1 .8-2 0t0-2z" /></svg>
      <Ico w={14} h={14} className="ml-[5px]" sw={1.6}><path d="M7 .8H.8v12.400h12.400V7M4.500 9.500L12 2M8.500 1h4.700v5" /></Ico>
      <svg width="6" height="14" viewBox="0 0 6 14" className="ml-[11px] shrink-0 fill-white"><path d="M.5 1h5v2h-5zM0 10h6l-3 4z" /></svg>
    </div>
  );
}

function UploadBadge() {
  return (
    <div className="absolute left-[1707px] top-7 z-20 flex h-[25px] w-[104px] overflow-hidden rounded-sm border border-[#1c97f8]">
      <div className="flex w-[29px] items-center justify-center bg-[#22a3ff]">
        <svg width="19" height="16" viewBox="0 0 19 16" fill="none" stroke="#fff" strokeWidth="2.600">
          <circle cx="9.500" cy="4.800" r="3.500" /><circle cx="4.500" cy="10.800" r="3.200" /><path d="M7 8.500q2.500-1 4 1.500l2 3M11.500 9a3.200 3.200 0 1 1 .5 4" />
        </svg>
      </div>
      <div className="flex flex-1 items-center justify-center bg-linear-to-tr from-[#b2e3fc] to-[#e2f4fe] pr-1 font-bold text-white">拖拽上传</div>
    </div>
  );
}

export default function App() {
  return (
    <div className="relative flex h-[1080px] w-[1919px] overflow-hidden border-l border-[#5e5049] bg-[#f6f8fa] font-['Noto_Sans','Noto_Sans_CJK_SC',sans-serif] text-xs text-[#38435c]">
      <div className="flex min-w-0 flex-1 flex-col">
        <TitleBar />
        <MenuBar />
        <Ribbon />
        <div className="flex h-[898px]">
          <div className="flex w-[1873px] flex-col">
            <FormulaBar />
            <div className="flex h-[854px]">
              <Sheet />
              <VerticalScroll />
            </div>
          </div>
          <SidePanel />
        </div>
        <SheetBar />
        <StatusBar />
      </div>
      <UploadBadge />
      <ImeBar />
      <div className="absolute bottom-[15px] right-[6px] font-['Noto_Sans_CJK_SC',sans-serif] text-[36.500px] font-black leading-[50px] text-[#808080]">最需教育</div>
    </div>
  );
}
